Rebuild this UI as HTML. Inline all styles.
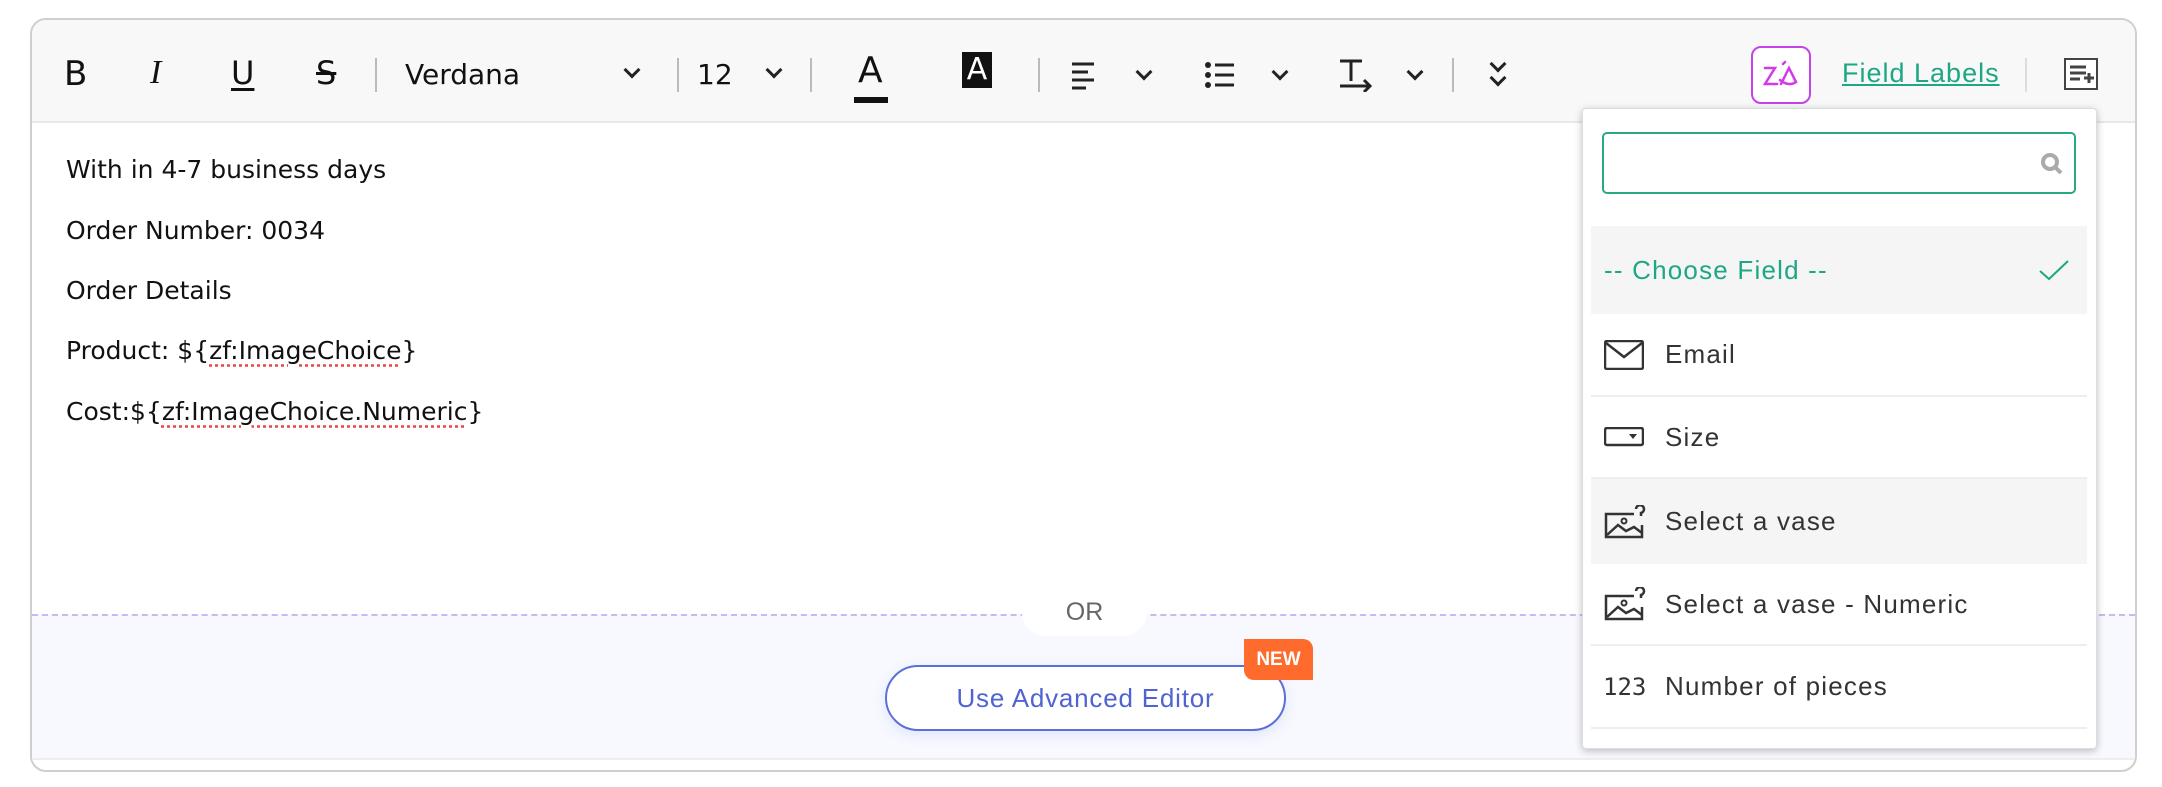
<!DOCTYPE html>
<html><head><meta charset="utf-8"><style>
*{box-sizing:border-box;margin:0;padding:0}
body{width:2162px;height:787px;background:#fff;position:relative;overflow:hidden;font-family:"Liberation Sans",sans-serif}
.a{position:absolute}
.box{left:30px;top:18px;width:2107px;height:754px;border:2px solid #cfcfcf;border-radius:16px;overflow:hidden;background:#fff}
.tb{left:0;top:0;width:100%;height:103px;background:#f8f8f8;border-bottom:2px solid #e8e8e8}
.sep{width:2px;height:34px;background:#bbb;top:38px}
.ic{font-family:"DejaVu Sans",sans-serif;color:#111}
.chev{width:12px;height:12px;border-right:3px solid #222;border-bottom:3px solid #222;transform:rotate(45deg)}
.txt{font-family:"DejaVu Sans",sans-serif;font-size:25px;color:#111;left:34px}
.sq{text-decoration:underline dotted #e44;text-underline-offset:5px}
.row{left:8px;width:496px;border-bottom:2px solid #eee;font-size:26px;color:#333;letter-spacing:1.2px;display:flex;align-items:center}
.row span{position:absolute;left:74px}
.row svg{position:absolute;left:13px}
</style></head><body>
<div class="a box">
 <div class="a tb">
  <div class="a ic" style="left:32px;top:34px;font-size:34px">B</div>
  <div class="a ic" style="left:118px;top:34px;font-size:34px;font-style:italic;font-family:'Liberation Serif',serif">I</div>
  <div class="a ic" style="left:199px;top:34px;font-size:32px;text-decoration:underline;text-underline-offset:4px">U</div>
  <div class="a ic" style="left:284px;top:34px;font-size:32px;text-decoration:line-through">S</div>
  <div class="a sep" style="left:343px"></div>
  <div class="a" style="left:373px;top:38px;font-size:28px;color:#111;font-family:'DejaVu Sans',sans-serif">Verdana</div>
  <div class="a chev" style="left:594px;top:44px"></div>
  <div class="a sep" style="left:645px"></div>
  <div class="a" style="left:665px;top:38px;font-size:28px;color:#111;font-family:'DejaVu Sans',sans-serif">12</div>
  <div class="a chev" style="left:736px;top:44px"></div>
  <div class="a sep" style="left:778px"></div>
  <div class="a ic" style="left:826px;top:30px;font-size:36px">A</div>
  <div class="a" style="left:822px;top:77px;width:34px;height:6px;background:#111"></div>
  <div class="a" style="left:930px;top:32px;width:30px;height:36px;background:#111;color:#fff;font-size:30px;text-align:center;font-family:'DejaVu Sans',sans-serif;line-height:36px">A</div>
  <div class="a sep" style="left:1006px"></div>
  <svg class="a" style="left:1038px;top:40px" width="30" height="30"><path d="M2 4h22M2 12h16M2 20h22M2 28h14" stroke="#222" stroke-width="3"/></svg>
  <div class="a chev" style="left:1106px;top:46px"></div>
  <svg class="a" style="left:1172px;top:40px" width="32" height="30"><circle cx="4" cy="5" r="3" fill="#222"/><circle cx="4" cy="15" r="3" fill="#222"/><circle cx="4" cy="25" r="3" fill="#222"/><path d="M11 5h19M11 15h19M11 25h19" stroke="#222" stroke-width="3"/></svg>
  <div class="a chev" style="left:1242px;top:46px"></div>
  <svg class="a" style="left:1306px;top:38px" width="36" height="34"><path d="M2 3h22M13 3v20M2 28h30M26 22l6 6-6 6" stroke="#222" stroke-width="3" fill="none"/></svg>
  <div class="a chev" style="left:1377px;top:46px"></div>
  <div class="a sep" style="left:1420px"></div>
  <div class="a chev" style="left:1460px;top:38px"></div>
  <div class="a chev" style="left:1460px;top:52px"></div>
  <div class="a" style="left:1719px;top:26px;width:60px;height:58px;border:2px solid #c444e8;border-radius:10px;background:#fff"></div>
  <svg class="a" style="left:1729px;top:38px" width="40" height="34"><path d="M4 10h10L4 26h12M20 26l8-16 7 14c-4 3-10 3-16-2M22 6l2-2" stroke="#d03ae8" stroke-width="2.5" fill="none" stroke-linecap="round"/></svg>
  <div class="a" style="left:1810px;top:38px;font-size:27px;color:#1ea784;text-decoration:underline;letter-spacing:1px">Field Labels</div>
  <div class="a sep" style="left:1993px;background:#ddd"></div>
  <svg class="a" style="left:2032px;top:38px" width="34" height="32"><rect x="1" y="1" width="32" height="30" fill="#fff" stroke="#444" stroke-width="2"/><path d="M6 9h16M6 15h16M6 21h10M20 20h10M25 15v10" stroke="#444" stroke-width="3"/></svg>
 </div>
 <div class="a txt" style="top:135px">With in 4-7 business days</div>
 <div class="a txt" style="top:196px">Order Number: 0034</div>
 <div class="a txt" style="top:256px">Order Details</div>
 <div class="a txt" style="top:316px">Product: ${<span class="sq">zf:ImageChoice</span>}</div>
 <div class="a txt" style="top:377px">Cost:${<span class="sq">zf:ImageChoice.Numeric</span>}</div>
 <div class="a" style="left:0;top:594px;width:100%;height:144px;background:#f8f9ff;border-top:2px dashed #c8b8f6"></div>
 <div class="a" style="left:990px;top:568px;width:125px;height:48px;background:#fff;border-radius:24px;text-align:center;font-size:25px;color:#666;line-height:48px">OR</div>
 <div class="a" style="left:853px;top:645px;width:401px;height:66px;border:2px solid #5a6fd8;border-radius:33px;background:#fff;box-shadow:0 4px 14px rgba(90,111,216,.15);text-align:center;line-height:62px;font-size:26px;color:#4f63d2;letter-spacing:.8px">Use Advanced Editor</div>
 <div class="a" style="left:1212px;top:619px;width:69px;height:41px;background:#ff6b2c;border-radius:0 10px 0 10px;color:#fff;font-size:19px;font-weight:bold;text-align:center;line-height:41px">NEW</div>
 <div class="a" style="left:0;top:738px;width:100%;height:2px;background:#eee"></div>
</div>
<div class="a" style="left:1582px;top:108px;width:515px;height:641px;background:#fff;border:1px solid #ddd;border-radius:4px;box-shadow:0 2px 8px rgba(0,0,0,.25)">
 <div class="a" style="left:19px;top:23px;width:474px;height:62px;border:2px solid #2aa784;border-radius:5px"></div>
 <svg class="a" style="left:456px;top:42px" width="26" height="26"><circle cx="11" cy="11" r="7" stroke="#aaa" stroke-width="4" fill="none"/><path d="M16 16l6 6" stroke="#aaa" stroke-width="4"/></svg>
 <div class="a row" style="top:117px;height:88px;background:#f5f5f5;border:none;color:#1ea784"><span style="left:13px">-- Choose Field --</span>
  <svg style="left:447px" width="32" height="22"><path d="M2 12l9 8 19-18" stroke="#1ea784" stroke-width="2" fill="none"/></svg></div>
 <div class="a row" style="top:205px;height:83px"><svg width="40" height="30"><rect x="1" y="1" width="38" height="28" rx="2" fill="none" stroke="#333" stroke-width="2.5"/><path d="M2 3l18 14 18-14" stroke="#333" stroke-width="2.5" fill="none"/></svg><span>Email</span></div>
 <div class="a row" style="top:288px;height:82px"><svg width="40" height="20"><rect x="1" y="1" width="38" height="17" rx="2" fill="none" stroke="#333" stroke-width="2.5"/><path d="M25 7h8l-4 5z" fill="#333"/></svg><span>Size</span></div>
 <div class="a row" style="top:370px;height:85px;background:#f5f5f5;border:none"><svg width="42" height="34"><path d="M30 9H2v23h36V20" fill="none" stroke="#333" stroke-width="2.5"/><path d="M3 30l11-10 8 6 8-4 8 6" fill="none" stroke="#333" stroke-width="2.5"/><circle cx="20" cy="16" r="2.5" fill="none" stroke="#333" stroke-width="2"/><path d="M32 4a4 4 0 1 1 5 4v3" fill="none" stroke="#333" stroke-width="2.5"/></svg><span>Select a vase</span></div>
 <div class="a row" style="top:455px;height:82px"><svg width="42" height="34"><path d="M30 9H2v23h36V20" fill="none" stroke="#333" stroke-width="2.5"/><path d="M3 30l11-10 8 6 8-4 8 6" fill="none" stroke="#333" stroke-width="2.5"/><circle cx="20" cy="16" r="2.5" fill="none" stroke="#333" stroke-width="2"/><path d="M32 4a4 4 0 1 1 5 4v3" fill="none" stroke="#333" stroke-width="2.5"/></svg><span>Select a vase - Numeric</span></div>
 <div class="a row" style="top:537px;height:83px"><span style="left:12px;font-size:24px;font-family:'DejaVu Sans Mono',monospace;letter-spacing:0">123</span><span>Number of pieces</span></div>
</div>
</body></html>
